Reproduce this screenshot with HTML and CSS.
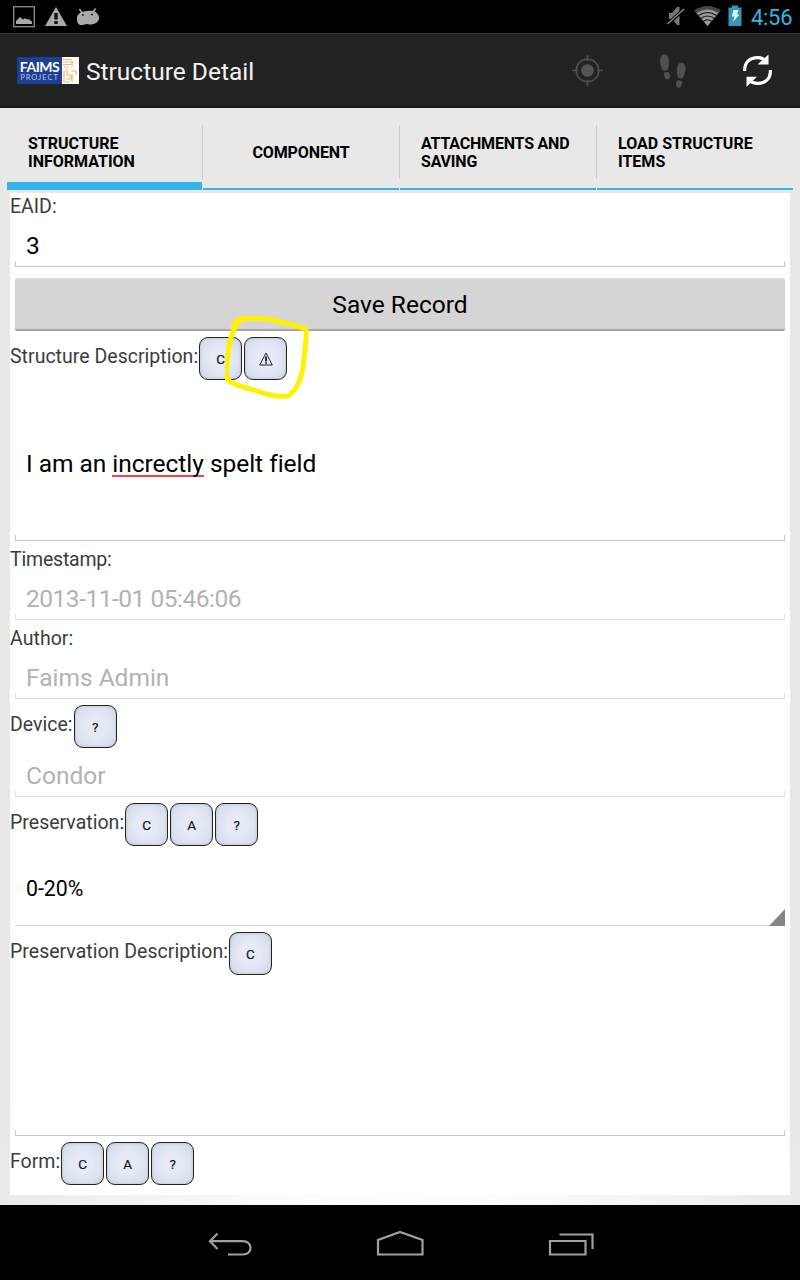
FILE: index.html
```html
<!DOCTYPE html>
<html lang="en">
<head>
<meta charset="utf-8">
<title>Structure Detail</title>
<link rel="stylesheet" href="styles.css">
</head>
<body>
<div class="screen">
  <header class="status">
    <svg class="status-left" width="110" height="33" viewBox="0 0 110 33">
      <rect x="13.7" y="6.7" width="20.6" height="20" fill="none" stroke="#858585" stroke-width="1.4"/>
      <path d="M16 24v-3l4-4 3 2.500 2-1.200 2 1 2 0 3 2.500v2.200z" fill="#aaa"/>
      <path d="M56 7L67 26H45z" fill="#aaa"/>
      <path d="M54.300 13h3.400v6.500h-3.400zM54.300 21h3.400v3h-3.400z" fill="#111"/>
      <path d="M79.500 9l2.500 4M95.500 8.500L93 12" stroke="#aaa" stroke-width="1.500"/>
      <path d="M77 18c0-4 4-6.500 10-7 7-.8 12 2 12 7 0 4-4 6.500-9 6.500-1.500 0-3-.5-4-.5-2 1-5 1.500-7 .5-2-1.200-2-4-2-6.500z" fill="#aaa"/>
      <circle cx="83" cy="15" r=".9" fill="#111"/><circle cx="92" cy="14.500" r=".9" fill="#111"/>
    </svg>
    <div class="status-right">
      <svg width="84" height="33" viewBox="0 0 84 33">
        <path d="M3 13h3l5-6h2.500v18H11l-5-6H3z" fill="#777"/>
        <path d="M1 25L18 9" stroke="#000" stroke-width="3.500"/>
        <path d="M1.500 24L18 9" stroke="#888" stroke-width="1.500"/>
        <path d="M41.500 26L28 10.500Q41.500 1.500 55 10.500z" fill="#484848"/>
        <path d="M41.500 26L30.500 13Q41.500 6 52.500 13z" fill="#999"/>
        <path d="M32.500 15.500Q41.500 9.500 50.500 15.500M34.500 18.500Q41.500 13.500 48.500 18.500M37 21.500Q41.500 18 46 21.500" fill="none" stroke="#111" stroke-width="1.200"/>
        <path d="M62.500 7.500h3.500v-2h6v2h3.500V26h-13z" fill="#3795b9"/>
        <path d="M67.500 10h5l-1.500 4.500h2.500L67 22l1.300-5.500h-2.500z" fill="#def3fb"/>
      </svg>
      <span class="clock">4:56</span>
    </div>
  </header>

  <div class="action-bar">
    <div class="logo">
      <div class="logo-name"><b>FAIMS</b><span>PROJECT</span></div>
      <svg width="17" height="27" viewBox="0 0 17 27">
        <path d="M1 2.500h9M1 5h11M1 7.500h8M2 10h5M10 5v5M2 13v12M5 12v6h4M9 14h5M7 20h3M10 17v8M4 22h6M14 14v4M3 25h5" fill="none" stroke="#f4b36d" stroke-width="1.200"/>
      </svg>
    </div>
    <h1 class="title">Structure Detail</h1>
    <svg class="actions" width="240" height="72" viewBox="560 34 240 72">
      <g fill="none" stroke="#4e4e4e" stroke-width="1.700">
        <circle cx="587.500" cy="70.500" r="11.300"/>
        <path d="M587.500 55v6M587.500 80v6M572 70.500h6M597 70.500h6"/>
      </g>
      <circle cx="587.500" cy="70.500" r="6.300" fill="#555"/>
      <g fill="#505050">
        <path d="M664.500 54.300c3 0 4.700 4 4.500 8.500-.1 3-.5 5-1.500 7.500l-4.500.5c-2-4-3-6.500-3-10 0-4 2-6.500 4.500-6.500z"/>
        <path d="M663.800 72.800l4.500-.8c1.200 1.500 2 3 1.700 5-.3 2.800-4 3-5 .8-.8-1.500-1-3-1.200-5z"/>
        <path d="M681.500 62.500c2.800 0 4.200 3 4 7-.2 3.500-1.500 6-2.800 9l-4.500-.8c-1-3-1.500-5-1.300-8 .2-4 2-7.200 4.600-7.200z"/>
        <path d="M677.300 80.300l5 .6c0 2-.4 4-1.300 5.600-1.300 2-4.700 1.400-5-1.300-.2-2 .4-3.400 1.300-4.900z"/>
      </g>
      <g fill="none" stroke="#fff" stroke-width="3.200">
        <path d="M744.700 71c-.4-9 5.500-13.400 13-13.400 3.500 0 6.500 1.400 9 3.600"/>
        <path d="M770.400 70c.4 9-5.500 13.400-13 13.400-3.500 0-6.500-1.400-9-3.600"/>
      </g>
      <path d="M768.500 54.500v10h-11zM746.500 86.700v-10h10.500z" fill="#fff"/>
    </svg>
  </div>

  <main class="content">
    <nav class="tabs">
      <div class="tab active"><span>STRUCTURE<br>INFORMATION</span></div>
      <div class="tab center"><span>COMPONENT</span></div>
      <div class="tab tight"><span>ATTACHMENTS AND<br>SAVING</span></div>
      <div class="tab"><span>LOAD STRUCTURE<br>ITEMS</span></div>
    </nav>
    <section class="panel">
      <div class="label first">EAID:</div>
      <div class="field">3</div>
      <div class="save">Save Record</div>

      <div class="key-row"><span>Structure Description:</span>
        <i class="key">C</i>
        <i class="key"><svg width="16" height="16" viewBox="0 0 16 16"><path d="M8 2L14.300 14H1.700z" fill="none" stroke="#222" stroke-width="1"/><path d="M8 5.500v5M8 11.300v1.500" stroke="#111" stroke-width="1.700"/></svg></i>
        <svg class="scribble" width="90" height="86" viewBox="225 314 90 86">
          <path fill="none" stroke="#fff200" stroke-width="5" stroke-linecap="round" stroke-linejoin="round" d="M241 319C252 318 264 318 273 320C284 323 298 326 306 329C307 340 304 357 303 367C301 382 294 394 287 396C278 397 267 395 257 391C245 387 232 385 228 380C224 371 228 357 229 346C231 335 235 325 241 319M233 326L238 320"/>
        </svg>
      </div>
      <div class="field tall"><span>I am an <u>increctly</u> spelt field</span></div>

      <div class="label stamp">Timestamp:</div>
      <div class="field disabled date">2013-11-01 05:46:06</div>
      <div class="label">Author:</div>
      <div class="field disabled">Faims Admin</div>

      <div class="key-row"><span>Device:</span><i class="key">?</i></div>
      <div class="field disabled device">Condor</div>

      <div class="key-row"><span>Preservation:</span><i class="key">C</i><i class="key">A</i><i class="key">?</i></div>
      <div class="spinner">0-20%<svg width="16" height="17" viewBox="0 0 16 17"><path d="M16 0v17H0z" fill="#858585"/></svg></div>

      <div class="key-row"><span>Preservation Description:</span><i class="key">C</i></div>
      <div class="field tall"></div>
      <div class="key-row"><span>Form:</span><i class="key">C</i><i class="key">A</i><i class="key">?</i></div>
    </section>
  </main>

  <footer class="navbar">
    <svg width="800" height="75" viewBox="0 1205 800 75" fill="none" stroke="#a0a0a0" stroke-width="2.200">
      <path d="M217.500 1233.500L210 1241.200L217.500 1249M211 1241.200H243C253 1241.200 253 1254.500 243 1254.500H228"/>
      <path d="M378 1240L400 1232L422.500 1240V1254.500H378z"/>
      <path d="M550 1241H585.500V1254.500H550zM559.500 1234.500H592.500V1249"/>
    </svg>
  </footer>
</div>
</body>
</html>
```

FILE: styles.css
```css
* { box-sizing: border-box; }
body { margin: 0; background: #000; font-family: Roboto, "Liberation Sans", sans-serif; }
svg { display: block; flex: none; }
.screen { width: 800px; height: 1280px; display: flex; flex-direction: column; overflow: hidden; }

.status { height: 33px; display: flex; justify-content: space-between; background: #000; }
.status-right { display: flex; align-items: center; width: 134px; }
.clock { color: #33b5e5; font-size: 22px; line-height: 33px; padding: 2px 0 0 1px; letter-spacing: -0.3px; white-space: nowrap; }

.action-bar { height: 75px; display: flex; align-items: center; background: #222; border-top: 1px solid #393939; border-bottom: 2px solid #191919; padding-left: 17px; }
.logo { display: flex; width: 62px; height: 27px; background: #fff; }
.logo-name { width: 45px; background: #1c3f94; color: #fff; display: flex; flex-direction: column; align-items: center; }
.logo-name b { font: 700 14px/15px Lato, sans-serif; margin-top: 2px; letter-spacing: -0.5px; }
.logo-name span { font: 400 7.5px/8px Lato, sans-serif; letter-spacing: 1px; color: #b9c6e6; }
.title { margin: 0 0 0 7px; padding-top: 3px; font-size: 24.5px; letter-spacing: 0; font-weight: 400; color: #f3f3f3; white-space: nowrap; }
.actions { margin-left: auto; }

.content { height: 1097px; padding: 0 10px; background: radial-gradient(ellipse 430px 260px at 50% 100%, #fefefe 0%, #fafafa 35%, #e8e8e8 100%); }
.tabs { height: 82px; margin: 0 -3px; display: grid; grid-template-columns: 195px 196px 196px 196px; column-gap: 1px; }
.tab { position: relative; padding: 10px 0 0 21px; display: flex; align-items: center; font-size: 16px; line-height: 18px; font-weight: 700; color: #000; border-bottom: 2px solid #33b5e5; white-space: nowrap; }
.tab.active { border-bottom-width: 8px; padding-top: 16px; }
.tab.center { justify-content: center; padding-left: 0; letter-spacing: -0.1px; }
.tab.tight { letter-spacing: -0.2px; }
.tab + .tab::before { content: ""; position: absolute; left: -1px; top: 17px; width: 1px; height: 54px; background: #cacaca; }

.panel { margin-top: 3px; height: 1002px; background: #fff; }
.label { height: 27px; margin-top: 5px; font-size: 19.5px; letter-spacing: 0.05px; line-height: 27px; color: #3c3c3c; white-space: nowrap; }
.label.first { margin-top: 0; letter-spacing: 0; }
.label.stamp { letter-spacing: -0.2px; }
.field, .spinner { position: relative; height: 47px; margin: 0 5px; padding: 5px 11px 0; display: flex; align-items: center; font-size: 24.5px; letter-spacing: 0; color: #000; border-bottom: 1px solid #c6c6c6; white-space: nowrap; }
.field::after { content: ""; position: absolute; left: 0; right: 0; bottom: 0; height: 5px; border: solid #cbcbcb; border-width: 0 1px; }
.disabled { color: #b2b2b2; border-color: #e0e0e0; }
.disabled::after { border-color: #e0e0e0; }
.date { letter-spacing: -0.48px; }
.tall { height: 161px; padding-top: 7px; }
.tall span { white-space: pre; letter-spacing: -0.03px; }
.tall u { text-decoration: none; display: inline-block; line-height: 23px; border-bottom: 2px solid #f54545; }
.device { height: 49px; padding-top: 7px; }
.save { margin: 11px 5px 0; height: 53px; border-radius: 2px; background: #d5d5d5; border-bottom: 2px solid #a5a5a5; border-top: 1px solid #dedede; text-align: center; font-size: 24.5px; line-height: 52px; color: #000; }

.key-row { position: relative; height: 49px; padding-top: 6px; display: flex; align-items: flex-start; gap: 2px; font-size: 19.5px; letter-spacing: 0.02px; color: #3c3c3c; white-space: nowrap; }
.key-row > span { line-height: 40px; margin-right: -1px; }
.key { width: 43px; height: 43px; flex: none; display: flex; align-items: center; justify-content: center; border: 1.5px solid #222; border-radius: 9px; background: radial-gradient(circle, #e5eaf6 35%, #d2d8e7 100%); box-shadow: inset 0 0 3px #b5bbcb; font-size: 13.5px; font-style: normal; letter-spacing: 0; color: #111; -webkit-text-stroke: 0.15px #111; }
.scribble { position: absolute; left: 215px; top: -17px; }
.spinner { height: 80px; padding-top: 6px; font-size: 21.3px; border-color: #d0d0d0; }
.spinner svg { position: absolute; right: 0; bottom: -1px; }
.navbar { height: 75px; background: #000; }
```
